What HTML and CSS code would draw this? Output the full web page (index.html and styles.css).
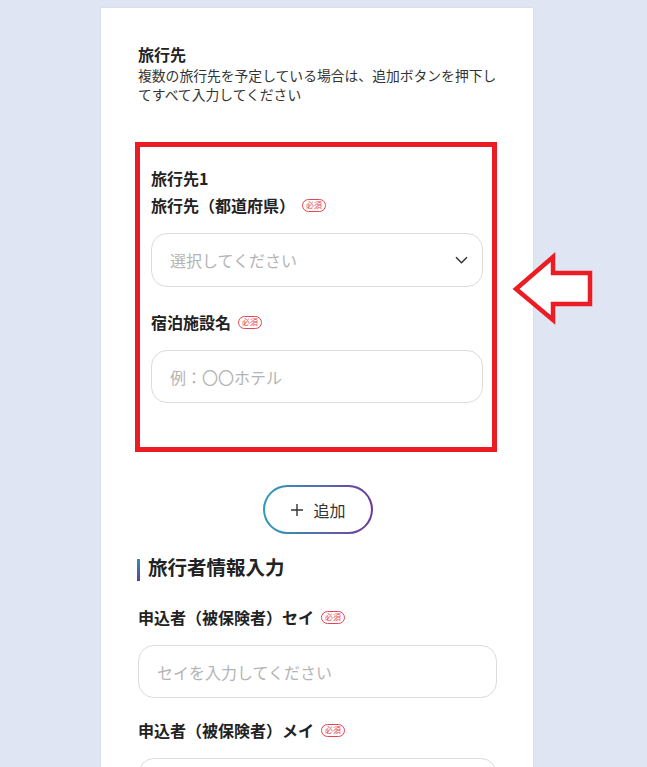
FILE: index.html
```html
<!DOCTYPE html>
<html lang="ja">
<head>
<meta charset="utf-8">
<title>旅行先</title>
<link rel="stylesheet" href="styles.css">
</head>
<body>
<main class="card">
  <section class="intro">
    <h2 class="title">旅行先</h2>
    <p class="desc">複数の旅行先を予定している場合は、追加ボタンを押下してすべて入力してください</p>
  </section>

  <section class="highlight">
    <h3 class="group-title">旅行先1</h3>
    <div class="field field-first">
      <label class="label">旅行先（都道府県）<span class="badge">必須</span></label>
      <div class="control select">
        <span class="placeholder">選択してください</span>
        <svg class="chevron" width="13" height="8" viewBox="0 0 13 8"><path d="M1 1.2 L6.5 6.7 L12 1.2" fill="none" stroke="#333" stroke-width="1.5"/></svg>
      </div>
    </div>
    <div class="field">
      <label class="label">宿泊施設名<span class="badge">必須</span></label>
      <div class="control"><span class="placeholder">例：〇〇ホテル</span></div>
    </div>
  </section>

  <div class="add-row">
    <button class="add-btn" type="button">
      <svg width="12" height="12" viewBox="0 0 12 12"><path d="M6 0 V12 M0 6 H12" stroke="#333" stroke-width="1.4"/></svg>
      <span>追加</span>
    </button>
  </div>

  <h2 class="section-heading">旅行者情報入力</h2>

  <div class="field field-after-heading">
    <label class="label">申込者（被保険者）セイ<span class="badge">必須</span></label>
    <div class="control"><span class="placeholder">セイを入力してください</span></div>
  </div>
  <div class="field field-tight">
    <label class="label">申込者（被保険者）メイ<span class="badge">必須</span></label>
    <div class="control"><span class="placeholder">メイを入力してください</span></div>
  </div>
</main>

<svg class="arrow" width="90" height="80" viewBox="0 0 90 80">
  <polygon points="6,39 43,7 43,23 80,23 80,54 43,54 43,70" fill="#fff" stroke="#ec1c24" stroke-width="4.5" stroke-linejoin="miter"/>
</svg>
</body>
</html>
```
FILE: styles.css
```css
* { box-sizing: border-box; }

html, body {
  margin: 0;
  padding: 0;
  background: #dfe5f3;
  height: 767px;
  overflow: hidden;
}

body {
  font-family: "Noto Sans CJK JP", "Noto Sans", sans-serif;
  color: #333;
  position: relative;
}

.card {
  width: 432px;
  margin: 8px 0 0 101px;
  background: #fff;
  padding: 34px 36px 40px 37px;
  min-height: 800px;
  box-shadow: 0 0 2px rgba(120, 140, 180, 0.2);
}

.title {
  margin: 0;
  font-size: 16px;
  line-height: 24px;
  font-weight: 700;
  color: #222;
}

.desc {
  margin: 0;
  font-size: 13.8px;
  line-height: 19px;
  color: #333;
}

.highlight {
  margin: 38px 0 0 -3px;
  width: calc(100% + 3px);
  border: 5px solid #ec1c24;
  padding: 19px 9px 44px 11px;
}

.group-title {
  margin: 0;
  font-size: 16px;
  line-height: 24px;
  font-weight: 700;
  color: #222;
}

.field { margin-top: 23px; }
.field-first { margin-top: 3px; }
.field-after-heading { margin-top: 24px; }
.field.field-tight { margin-top: 20px; }

.label {
  display: flex;
  align-items: center;
  font-size: 16px;
  line-height: 24px;
  font-weight: 700;
  color: #222;
}

.badge {
  display: inline-flex;
  align-items: center;
  justify-content: center;
  margin-left: 7px;
  height: 13px;
  padding: 0 3px;
  border: 1px solid #e8434f;
  border-radius: 7px;
  color: #e8434f;
  font-size: 8px;
  line-height: 1;
  font-weight: 400;
}

.control {
  margin-top: 16px;
  height: 53px;
  border: 1px solid #dcdcdc;
  border-radius: 16px;
  display: flex;
  align-items: center;
  padding: 0 14px 0 18px;
  background: #fff;
}

.select { justify-content: space-between; height: 54px; }

.placeholder {
  font-size: 16px;
  color: #b4b4b4;
}

.add-row {
  display: flex;
  justify-content: center;
  margin-top: 33px;
}

.add-btn {
  width: 110px;
  height: 49px;
  display: flex;
  align-items: center;
  justify-content: center;
  gap: 10px;
  border: 2px solid transparent;
  border-radius: 25px;
  background:
    linear-gradient(#fff, #fff) padding-box,
    linear-gradient(90deg, #2e9db7, #5b64a8 60%, #6c3a9b) border-box;
  font-family: inherit;
  font-size: 16px;
  color: #333;
  padding: 0 0 0 2px;
}

.section-heading {
  display: flex;
  align-items: flex-end;
  gap: 8px;
  margin: 19px 0 0;
  font-size: 19.5px;
  line-height: 28px;
  font-weight: 700;
  color: #222;
}

.section-heading::before {
  content: "";
  width: 3px;
  height: 22px;
  background: linear-gradient(#2a93b3, #5d3e9b);
  margin-left: -1px;
}

.arrow {
  position: absolute;
  left: 510px;
  top: 250px;
}
```
